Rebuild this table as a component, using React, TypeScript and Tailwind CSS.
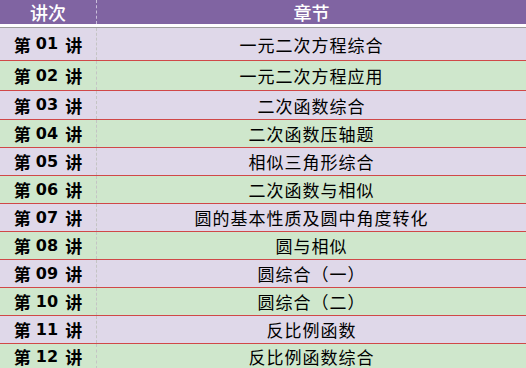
import React from "react";

const rows = [
  { no: "01", title: "一元二次方程综合", h: "h-[33px]" },
  { no: "02", title: "一元二次方程应用", h: "h-[30px]" },
  { no: "03", title: "二次函数综合", h: "h-[29px]" },
  { no: "04", title: "二次函数压轴题", h: "h-[28px]" },
  { no: "05", title: "相似三角形综合", h: "h-[28px]" },
  { no: "06", title: "二次函数与相似", h: "h-[28px]" },
  { no: "07", title: "圆的基本性质及圆中角度转化", h: "h-[28px]" },
  { no: "08", title: "圆与相似", h: "h-[28px]" },
  { no: "09", title: "圆综合（一）", h: "h-[28px]" },
  { no: "10", title: "圆综合（二）", h: "h-[28px]" },
  { no: "11", title: "反比例函数", h: "h-[28px]" },
  { no: "12", title: "反比例函数综合", h: "h-[25px] border-b-0" },
];

const cjk = "font-['Noto_Sans_CJK_SC',sans-serif]";

export default function App() {
  return (
    <div className={`w-[526px] h-[368px] overflow-hidden bg-white ${cjk}`}>
      <div className="grid grid-cols-[97px_1fr] h-[24px] bg-[#8064a2] text-white text-[18px] font-medium leading-none">
        <div className="flex items-center justify-center border-r border-dashed border-[#c9bedb]">
          讲次
        </div>
        <div className="flex items-center justify-center">章节</div>
      </div>
      <div className="h-[3px] bg-white" />
      <div className="h-px bg-[#9c9c9c]" />
      {rows.map((r, i) => (
        <div
          key={r.no}
          className={`grid grid-cols-[97px_1fr] ${r.h} border-b border-[#d04848] ${
            i % 2 === 0 ? "bg-[#dfd8e9]" : "bg-[#cfe7cc]"
          }`}
        >
          <div className="flex items-center justify-center border-r border-dashed border-[#c4c4c4] text-[17px] font-bold text-black leading-none">
            <span>第</span>
            <span className="ml-[5px] mr-[7px] font-['DejaVu_Sans',sans-serif] text-[16px]">
              {r.no}
            </span>
            <span>讲</span>
          </div>
          <div className="flex items-center justify-center text-[17px] tracking-[1px] text-black leading-none">
            {r.title}
          </div>
        </div>
      ))}
    </div>
  );
}
